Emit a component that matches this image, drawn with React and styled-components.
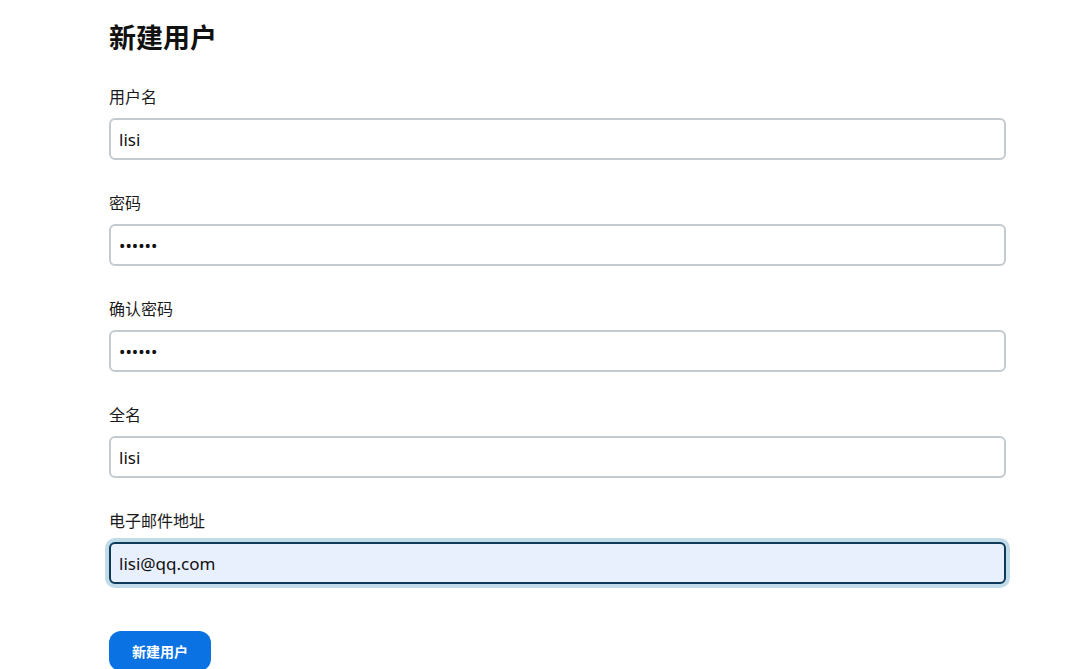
import React from "react";
import styled, { createGlobalStyle } from "styled-components";

const GlobalStyle = createGlobalStyle`
  body {
    margin: 0;
    background: #ffffff;
    font-family: "Noto Sans", "Noto Sans CJK SC", sans-serif;
    color: #1a1a1a;
  }
`;

const fields = [
  { id: "username", label: "用户名", type: "text", value: "lisi" },
  { id: "password", label: "密码", type: "password", value: "123456" },
  { id: "confirm", label: "确认密码", type: "password", value: "123456" },
  { id: "fullname", label: "全名", type: "text", value: "lisi" },
  { id: "email", label: "电子邮件地址", type: "email", value: "lisi@qq.com", focused: true },
];

const App = () => {
  return (
    <Page>
      <GlobalStyle />
      <Form onSubmit={(e) => e.preventDefault()}>
        <Title>新建用户</Title>
        {fields.map((f) => (
          <Field key={f.id}>
            <Label htmlFor={f.id}>{f.label}</Label>
            <Input
              id={f.id}
              type={f.type}
              defaultValue={f.value}
              $focused={f.focused}
            />
          </Field>
        ))}
        <SubmitButton type="submit">新建用户</SubmitButton>
      </Form>
    </Page>
  );
};

const Page = styled.div`
  padding: 20px 0 0 109px;
  height: 669px;
  box-sizing: border-box;
  overflow: hidden;
`;

const Form = styled.form`
  width: 897px;
  display: flex;
  flex-direction: column;
`;

const Title = styled.h1`
  margin: 0 0 29px;
  font-size: 27px;
  line-height: 36px;
  font-weight: 700;
  color: #111;
`;

const Field = styled.div`
  display: flex;
  flex-direction: column;
  gap: 9px;
  margin-bottom: 31px;
`;

const Label = styled.label`
  font-size: 16px;
  line-height: 24px;
  color: #1a1a1a;
`;

const Input = styled.input`
  height: 42px;
  box-sizing: border-box;
  padding: 0 8px;
  font-family: inherit;
  font-size: 17px;
  color: #111;
  border-radius: 6px;
  outline: none;
  border: 2px solid ${(p) => (p.$focused ? "#0d3a58" : "#c3cbd0")};
  background: ${(p) => (p.$focused ? "#e8f0fe" : "#ffffff")};
  box-shadow: ${(p) => (p.$focused ? "0 0 0 4px #c2dbe9" : "none")};
`;

const SubmitButton = styled.button`
  align-self: flex-start;
  margin-top: 16px;
  width: 102px;
  height: 40px;
  border: none;
  border-radius: 12px;
  background: #0b72e3;
  color: #ffffff;
  font-family: inherit;
  font-size: 14px;
  font-weight: 700;
  cursor: pointer;
`;

export default App;
